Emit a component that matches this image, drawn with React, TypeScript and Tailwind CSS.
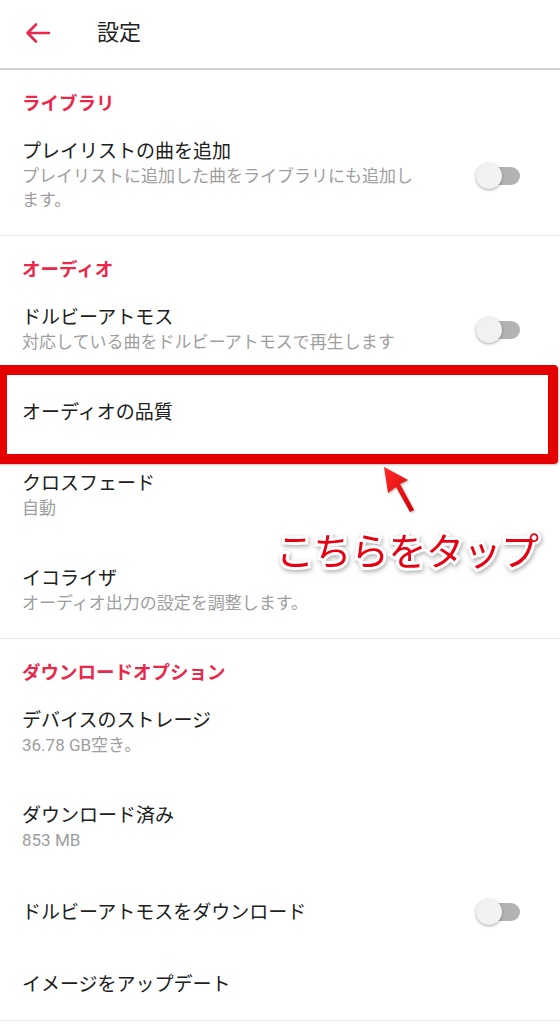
import React from 'react';

const jp = '[font-family:Roboto,"Noto_Sans_CJK_JP",sans-serif]';

function Toggle() {
  return (
    <div className="relative h-[28px] w-[46px] shrink-0">
      <div className="absolute left-[10px] top-[5px] h-[18px] w-[34px] rounded-full bg-[#b3b3b3]" />
      <div className="absolute left-0 top-[1px] h-[26px] w-[26px] rounded-full bg-[#f1f1f1] shadow-[0_1px_3px_rgba(0,0,0,0.35)]" />
    </div>
  );
}

function SectionTitle({ label }: { label: string }) {
  return (
    <div className="px-[22px] pt-[22px]">
      <div className="text-[18.5px] font-bold leading-[24px] text-[#e8294c]">{label}</div>
    </div>
  );
}

type Item = { title: string; sub?: string[]; toggle?: boolean };

function Row({ item }: { item: Item }) {
  return (
    <div className="flex items-center py-[23px] pl-[22px] pr-[38px]">
      <div className="min-w-0 flex-1 pr-[30px]">
        <div className="whitespace-nowrap text-[19px] leading-[25px] text-[#202020]">{item.title}</div>
        {item.sub?.map((s, i) => (
          <div key={i} className="whitespace-nowrap text-[17px] leading-[24px] text-[#9e9e9e]">
            {s}
          </div>
        ))}
      </div>
      {item.toggle && <Toggle />}
    </div>
  );
}

export default function App() {
  const library: Item[] = [
    {
      title: 'プレイリストの曲を追加',
      sub: ['プレイリストに追加した曲をライブラリにも追加し', 'ます。'],
      toggle: true,
    },
  ];
  const audio: Item[] = [
    { title: 'ドルビーアトモス', sub: ['対応している曲をドルビーアトモスで再生します'], toggle: true },
    { title: 'オーディオの品質' },
    { title: 'クロスフェード', sub: ['自動'] },
    { title: 'イコライザ', sub: ['オーディオ出力の設定を調整します。'] },
  ];
  const downloads: Item[] = [
    { title: 'デバイスのストレージ', sub: ['36.78 GB空き。'] },
    { title: 'ダウンロード済み', sub: ['853 MB'] },
    { title: 'ドルビーアトモスをダウンロード', toggle: true },
    { title: 'イメージをアップデート' },
  ];

  return (
    <div className={`relative h-[1024px] w-[560px] overflow-hidden bg-white ${jp}`}>
      {/* top bar */}
      <div className="flex h-[70px] items-center border-b-2 border-[#d2d2d2]">
        <svg className="ml-[25px] mt-[-2px]" width="26" height="22" viewBox="0 0 26 22">
          <path d="M2.5 11 H24 M11 2.5 L2.5 11 L11 19.5" fill="none" stroke="#e8294c" strokeWidth="2.6" strokeLinecap="round" strokeLinejoin="round" />
        </svg>
        <div className="ml-[46px] mt-[-4px] text-[22px] text-[#222]">設定</div>
      </div>

      <SectionTitle label="ライブラリ" />
      {library.map((it, i) => (
        <Row key={i} item={it} />
      ))}
      <div className="h-px bg-[#e6e6e6]" />

      <SectionTitle label="オーディオ" />
      {audio.map((it, i) => (
        <Row key={i} item={it} />
      ))}
      <div className="h-px bg-[#e6e6e6]" />

      <SectionTitle label="ダウンロードオプション" />
      {downloads.map((it, i) => (
        <Row key={i} item={it} />
      ))}
      <div className="h-px bg-[#e6e6e6]" />

      {/* annotation: highlight box */}
      <div className="absolute left-[-3px] top-[365px] h-[99px] w-[561px] rounded-[4px] border-[10px] border-[#e50000] shadow-[1px_1px_2px_rgba(0,0,0,0.25)]" />

      {/* annotation: arrow */}
      <svg className="absolute left-[370px] top-[460px]" width="56" height="60" viewBox="0 0 56 60">
        <defs>
          <linearGradient id="ag" x1="0" y1="0" x2="1" y2="1">
            <stop offset="0" stopColor="#ff2a2a" />
            <stop offset="1" stopColor="#d10000" />
          </linearGradient>
        </defs>
        <g style={{ filter: 'drop-shadow(1px 1px 1px rgba(0,0,0,0.3))' }}>
          <path d="M14 7 L38 20 L30 24 L44 50 L40 52 L26 27 L18 33 Z" fill="url(#ag)" />
        </g>
      </svg>

      {/* annotation: label */}
      <div className="absolute left-[276px] top-[526px] text-[38px] font-normal leading-[52px] tracking-[-0.5px] text-[#e60012] [-webkit-text-stroke:6px_white] [paint-order:stroke_fill] drop-shadow-[1px_2px_2px_rgba(0,0,0,0.3)]">
        こちらをタップ
      </div>
    </div>
  );
}
